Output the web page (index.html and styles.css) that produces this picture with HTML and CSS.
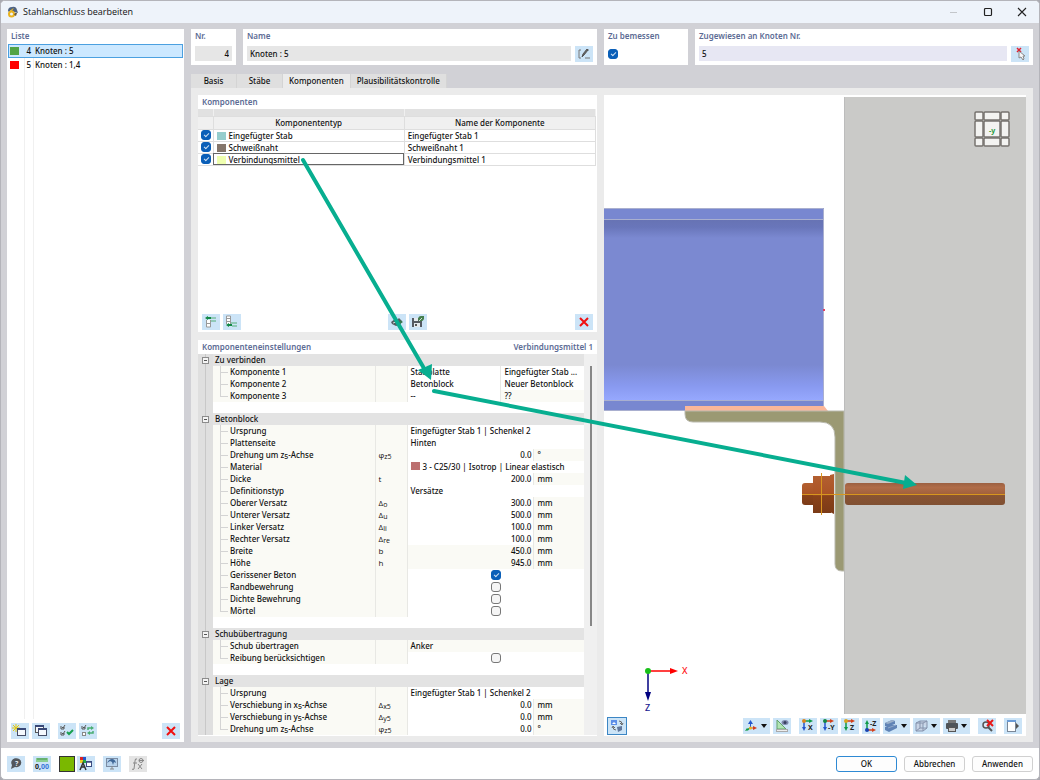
FILE: index.html
```html
<!DOCTYPE html>
<html lang="de">
<head>
<meta charset="UTF-8">
<meta name="viewport" content="width=device-width, initial-scale=1.0">
<title>Stahlanschluss bearbeiten</title>
<link rel="stylesheet" href="styles.css">
</head>
<body>

<div class="dialog">
  <header class="titlebar">
    <svg class="logo" width="12" height="12" viewBox="0 0 12 12"><path d="M1 5Q1 1 5 1Q9 0 10 4L11 7L7 6L4 4L2 6Z" fill="#4f6484"/><path d="M2 6L5 3L7 2L4 6Z" fill="#f0b81c"/><circle cx="4.500" cy="8" r="2.500" fill="none" stroke="#e9b320" stroke-width="2"/><path d="M8 7L10 7L9 10L7 9Z" fill="#6d5a35"/></svg>
    <h1>Stahlanschluss bearbeiten</h1>
    <button class="win-btn" aria-label="Minimieren"><svg width="10" height="10" viewBox="0 0 10 10"><path d="M1 5.500H8" stroke="#c3c6ca"/></svg></button>
    <button class="win-btn" aria-label="Maximieren"><svg width="10" height="10" viewBox="0 0 10 10"><rect x="1.500" y="1.500" width="7" height="7" rx="1" fill="none" stroke="#222" stroke-width="1.200"/></svg></button>
    <button class="win-btn" aria-label="Schließen"><svg width="10" height="10" viewBox="0 0 10 10"><path d="M1 1L9 9M9 1L1 9" stroke="#222" stroke-width="1.100"/></svg></button>
  </header>

  <div class="workspace">
    <aside class="panel list-panel">
      <h2>Liste</h2>
      <ul class="list">
        <li class="selected"><i class="swatch green"></i><span class="num">4</span><span>Knoten : 5</span></li>
        <li><i class="swatch red"></i><span class="num">5</span><span>Knoten : 1,4</span></li>
      </ul>
      <div class="tools">
        <button class="tool" aria-label="Neu"><svg width="18" height="16" viewBox="0 0 18 16"><path d="M5 1V9M1 5H9M2 2L8 8M8 2L2 8" stroke="#e2c918"/><rect x="6.500" y="5.500" width="8" height="7" fill="#f4f8fd" stroke="#444c66"/><path d="M6 6H15" stroke="#384878" stroke-width="2"/></svg></button>
        <button class="tool" aria-label="Kopieren"><svg width="18" height="16" viewBox="0 0 18 16"><rect x="3.500" y="2.500" width="8" height="7" fill="#f4f8fd" stroke="#555"/><path d="M3 3H12" stroke="#384878" stroke-width="2"/><rect x="6.500" y="5.500" width="8" height="7" fill="#f4f8fd" stroke="#444c66"/><path d="M6 6H15" stroke="#384878" stroke-width="2"/></svg></button>
        <button class="tool push" aria-label="Alle prüfen"><svg width="18" height="16" viewBox="0 0 18 16"><path d="M3 3V6H6V4M4 4L5 5L7 2M3 9V12H6V10M4 10L5 11L7 8" fill="none" stroke="#555"/><path d="M9 9L11 11L15 7" fill="none" stroke="#18a050" stroke-width="2"/></svg></button>
        <button class="tool" aria-label="Auswahl umkehren"><svg width="18" height="16" viewBox="0 0 18 16"><path d="M3 3V6H6V4M4 4L5 5L7 2" fill="none" stroke="#555"/><rect x="3.500" y="9.500" width="3" height="3" fill="#fff" stroke="#888"/><path d="M9 7V5H13M14 8V10H10" fill="none" stroke="#48ad72" stroke-width="1.500"/><path d="M12 3L15 5L12 7ZM11 8L8 10L11 12Z" fill="#48ad72"/></svg></button>
        <button class="tool right" aria-label="Löschen"><svg width="18" height="16" viewBox="0 0 18 16"><path d="M5 4L13 12M13 4L5 12" stroke="#f01010" stroke-width="2"/></svg></button>
      </div>
    </aside>

    <main class="main">
      <div class="fields">
        <div class="panel field">
          <label for="nr">Nr.</label>
          <input id="nr" class="text right-text" value="4" readonly>
        </div>
        <div class="panel field">
          <label for="name">Name</label>
          <div class="field-row">
            <input id="name" class="text" value="Knoten : 5" readonly>
            <button class="tool" aria-label="Name bearbeiten"><svg width="18" height="16" viewBox="0 0 18 16"><path d="M6 4H4V12H6M10 12H15M12 4H14" fill="none" stroke="#777"/><path d="M7 11L8 8L12 3L13 4L9 9Z" fill="#666" stroke="#555"/></svg></button>
          </div>
        </div>
        <div class="panel field">
          <label for="design">Zu bemessen</label>
          <div class="field-row"><input id="design" type="checkbox" checked></div>
        </div>
        <div class="panel field">
          <label for="assigned">Zugewiesen an Knoten Nr.</label>
          <div class="field-row">
            <input id="assigned" class="text lilac" value="5">
            <button class="tool" aria-label="Knoten wählen"><svg width="18" height="16" viewBox="0 0 18 16"><path d="M6 2L10 6M10 2L6 6" stroke="#e02030" stroke-width="1.500"/><path d="M8 5V12L10 11L12 14L13 13L12 10H14Z" fill="#f7f7fa" stroke="#888"/></svg></button>
          </div>
        </div>
      </div>

      <nav class="tabs">
        <button class="tab">Basis</button>
        <button class="tab">Stäbe</button>
        <button class="tab wide active">Komponenten</button>
        <button class="tab wide">Plausibilitätskontrolle</button>
      </nav>

      <div class="content">
        <div class="left">
          <section class="panel components">
            <h2>Komponenten</h2>
            <table class="comp-table">
              <colgroup><col class="c-check"><col><col></colgroup>
              <thead>
                <tr class="strip"><td></td><td></td><td></td></tr>
                <tr><th></th><th>Komponententyp</th><th>Name der Komponente</th></tr>
              </thead>
              <tbody>
                <tr><td><input type="checkbox" aria-label="Eingefügter Stab" checked></td><td><i class="swatch teal"></i>Eingefügter Stab</td><td>Eingefügter Stab 1</td></tr>
                <tr><td><input type="checkbox" aria-label="Schweißnaht" checked></td><td><i class="swatch brown"></i>Schweißnaht</td><td>Schweißnaht 1</td></tr>
                <tr><td><input type="checkbox" aria-label="Verbindungsmittel" checked></td><td class="focus"><i class="swatch lime"></i>Verbindungsmittel</td><td>Verbindungsmittel 1</td></tr>
              </tbody>
            </table>
            <div class="tools">
              <button class="tool" aria-label="Davor einfügen"><svg width="18" height="16" viewBox="0 0 18 16"><path d="M4.500 6V13H8.500V6M5 9.500H8" fill="#fff" stroke="#999"/><path d="M8 4H14M9 7H14" stroke="#54ae78"/><path d="M3 4L6 2V3H9V5H6V6Z" fill="#118844"/></svg></button>
              <button class="tool" aria-label="Danach einfügen"><svg width="18" height="16" viewBox="0 0 18 16"><path d="M3.500 10V2H7.500V10M4 4.500H7M4 7.500H7" fill="#fff" stroke="#999"/><path d="M8 9H14M9 12H14" stroke="#54ae78"/><path d="M3 11L6 9V10H9V12H6V13Z" fill="#118844"/></svg></button>
              <button class="tool center" aria-label="Bibliothek"><svg width="18" height="16" viewBox="0 0 18 16"><path d="M3 8L7 5L9 6L11 4L14 7L12 11L8 12L4 10Z" fill="#555b62"/><path d="M5 9L8 8L11 9" stroke="#ddd" fill="none"/><path d="M12 6L15 8L12 10Z" fill="#387a50"/></svg></button>
              <button class="tool" aria-label="Speichern"><svg width="18" height="16" viewBox="0 0 18 16"><path d="M3 4H12L13 5V13H3Z" fill="#555a62"/><rect x="5" y="4" width="4" height="3" fill="#e4e9ee"/><rect x="5" y="9" width="6" height="4" fill="#e4e9ee"/><path d="M6 10V12H8V10Z" fill="#555"/><path d="M9 6Q9 2 12 2L15 2V5Q14 8 10 7Z" fill="#467f4d"/><path d="M10 7L13 4" stroke="#cfe2d2"/></svg></button>
              <button class="tool right" aria-label="Komponente löschen"><svg width="18" height="16" viewBox="0 0 18 16"><path d="M5 4L13 12M13 4L5 12" stroke="#f01010" stroke-width="2"/></svg></button>
            </div>
          </section>

          <section class="panel settings">
            <div class="settings-head"><h2>Komponenteneinstellungen</h2><h2>Verbindungsmittel 1</h2></div>
            <div class="tree-wrap">
              <table class="tree">
                <colgroup><col class="t-gutter"><col class="t-label"><col class="t-sym"><col><col class="t-num"><col class="t-unit"></colgroup>
                <tbody>
                  <tr class="group"><td><button class="fold" aria-label="Zuklappen"></button></td><th colspan="5">Zu verbinden</th></tr>
                  <tr><td></td><td>Komponente 1</td><td></td><td>Stabplatte</td><td class="sep" colspan="2">Eingefügter Stab ...</td></tr>
                  <tr><td></td><td>Komponente 2</td><td></td><td>Betonblock</td><td class="sep" colspan="2">Neuer Betonblock</td></tr>
                  <tr class="last"><td></td><td>Komponente 3</td><td></td><td>--</td><td class="sep off" colspan="2">??</td></tr>
                  <tr class="gap"><td></td><td colspan="5"></td></tr>

                  <tr class="group"><td><button class="fold" aria-label="Zuklappen"></button></td><th colspan="5">Betonblock</th></tr>
                  <tr><td></td><td>Ursprung</td><td></td><td colspan="3">Eingefügter Stab 1 | Schenkel 2</td></tr>
                  <tr><td></td><td>Plattenseite</td><td></td><td colspan="3">Hinten</td></tr>
                  <tr><td></td><td>Drehung um z<small>5</small>-Achse</td><td>φ<small>z5</small></td><td class="number" colspan="2">0.0</td><td class="unit">°</td></tr>
                  <tr><td></td><td>Material</td><td></td><td colspan="3"><i class="swatch rose"></i>3 - C25/30 | Isotrop | Linear elastisch</td></tr>
                  <tr><td></td><td>Dicke</td><td>t</td><td class="number" colspan="2">200.0</td><td class="unit">mm</td></tr>
                  <tr><td></td><td>Definitionstyp</td><td></td><td colspan="3">Versätze</td></tr>
                  <tr><td></td><td>Oberer Versatz</td><td>Δ<small>o</small></td><td class="number" colspan="2">300.0</td><td class="unit">mm</td></tr>
                  <tr><td></td><td>Unterer Versatz</td><td>Δ<small>u</small></td><td class="number" colspan="2">500.0</td><td class="unit">mm</td></tr>
                  <tr><td></td><td>Linker Versatz</td><td>Δ<small>li</small></td><td class="number" colspan="2">100.0</td><td class="unit">mm</td></tr>
                  <tr><td></td><td>Rechter Versatz</td><td>Δ<small>re</small></td><td class="number" colspan="2">100.0</td><td class="unit">mm</td></tr>
                  <tr><td></td><td>Breite</td><td>b</td><td class="number off" colspan="2">450.0</td><td class="unit">mm</td></tr>
                  <tr><td></td><td>Höhe</td><td>h</td><td class="number off" colspan="2">945.0</td><td class="unit">mm</td></tr>
                  <tr><td></td><td><label for="cracked">Gerissener Beton</label></td><td></td><td colspan="3"><input id="cracked" type="checkbox" checked></td></tr>
                  <tr><td></td><td><label for="edge">Randbewehrung</label></td><td></td><td colspan="3"><input id="edge" type="checkbox"></td></tr>
                  <tr><td></td><td><label for="dense">Dichte Bewehrung</label></td><td></td><td colspan="3"><input id="dense" type="checkbox"></td></tr>
                  <tr class="last"><td></td><td><label for="grout">Mörtel</label></td><td></td><td colspan="3"><input id="grout" type="checkbox"></td></tr>
                  <tr class="gap"><td></td><td colspan="5"></td></tr>

                  <tr class="group"><td><button class="fold" aria-label="Zuklappen"></button></td><th colspan="5">Schubübertragung</th></tr>
                  <tr><td></td><td>Schub übertragen</td><td></td><td class="off" colspan="3">Anker</td></tr>
                  <tr class="last"><td></td><td><label for="friction">Reibung berücksichtigen</label></td><td></td><td colspan="3"><input id="friction" type="checkbox"></td></tr>
                  <tr class="gap"><td></td><td colspan="5"></td></tr>

                  <tr class="group"><td><button class="fold" aria-label="Zuklappen"></button></td><th colspan="5">Lage</th></tr>
                  <tr><td></td><td>Ursprung</td><td></td><td colspan="3">Eingefügter Stab 1 | Schenkel 2</td></tr>
                  <tr><td></td><td>Verschiebung in x<small>5</small>-Achse</td><td>Δ<small>x5</small></td><td class="number" colspan="2">0.0</td><td class="unit">mm</td></tr>
                  <tr><td></td><td>Verschiebung in y<small>5</small>-Achse</td><td>Δ<small>y5</small></td><td class="number" colspan="2">0.0</td><td class="unit">mm</td></tr>
                  <tr class="last"><td></td><td>Drehung um z<small>5</small>-Achse</td><td>φ<small>z5</small></td><td class="number" colspan="2">0.0</td><td class="unit">°</td></tr>
                </tbody>
              </table>
              <div class="scroll"><div class="thumb"></div></div>
            </div>
          </section>
        </div>

        <section class="view">
          <div class="canvas">
            <svg class="scene" width="100%" height="100%">
              <defs>
                <linearGradient id="web" x1="0" y1="0" x2="0" y2="1">
                  <stop offset="0" stop-color="#6773b4"/>
                  <stop offset=".04" stop-color="#6976ba"/>
                  <stop offset=".1" stop-color="#7b89d1"/>
                  <stop offset=".8" stop-color="#7b89d1"/>
                  <stop offset=".92" stop-color="#899af0"/>
                  <stop offset="1" stop-color="#97a9ff"/>
                </linearGradient>
                <linearGradient id="nut" x1="0" y1="0" x2="0" y2="1">
                  <stop offset="0" stop-color="#b35f30"/>
                  <stop offset=".48" stop-color="#ab5426"/>
                  <stop offset=".55" stop-color="#8a4219"/>
                  <stop offset="1" stop-color="#7b3b17"/>
                </linearGradient>
                <linearGradient id="rod" x1="0" y1="0" x2="0" y2="1">
                  <stop offset="0" stop-color="#9c6041"/>
                  <stop offset=".2" stop-color="#b06c48"/>
                  <stop offset=".5" stop-color="#a2613c"/>
                  <stop offset=".55" stop-color="#8a5432"/>
                  <stop offset="1" stop-color="#805033"/>
                </linearGradient>
              </defs>
              <!-- Beton -->
              <rect x="241" y="2" width="3000" height="3000" fill="#cacac8"/>
              <path d="M240.500 2V3000" stroke="#bcbcbc"/>
              <!-- Träger -->
              <rect x="0" y="113" width="220" height="203" fill="#7887d0"/>
              <rect x="0" y="125" width="220" height="181" fill="url(#web)"/>
              <path d="M0 113.500H219.500V316M0 124.500H219M0 305.500H219M0 315.500H82" fill="none" stroke="#a9afcf"/>
              <path d="M219 215H221" stroke="#e04060" stroke-width="2"/>
              <!-- Schweißnaht und Winkel -->
              <path d="M81 311H220L224 316H81Z" fill="#fbb799"/>
              <path d="M81 316H240V476H238Q231 476 231 469V342Q231 327 216 327H89Q81 327 81 319Z" fill="#9b9973" stroke="#b9b9ae"/>
              <!-- Anker -->
              <rect x="241" y="388" width="160" height="22" rx="3" fill="url(#rod)"/>
              <rect x="198" y="388" width="14" height="22" rx="3" fill="url(#nut)"/>
              <rect x="209" y="381" width="18" height="37" fill="url(#nut)"/>
              <path d="M226 380L230 379V419L226 417Z" fill="url(#nut)"/>
              <path d="M198 399.500H401M217.500 378V420" stroke="#d8961e"/>
              <!-- Achsenkreuz -->
              <path d="M44 576H67" stroke="#ff0000" stroke-width="1.500"/>
              <path d="M66 573L74 576L66 579Z" fill="#ff0000"/>
              <path d="M44 576V599" stroke="#000080" stroke-width="1.500"/>
              <path d="M41 597L44 606L47 597Z" fill="#000080"/>
              <circle cx="44" cy="576" r="3" fill="#18c018"/>
              <text x="78" y="579" class="axis" fill="#ff2020">X</text>
              <text x="41" y="616" class="axis" fill="#202090">Z</text>
            </svg>
            <svg class="cube" width="36" height="36" viewBox="0 0 36 36"><g fill="#f3f3f1" stroke="#77736f" stroke-width="1.500"><rect x="1" y="1" width="8" height="8" rx="1"/><rect x="10" y="1" width="16" height="8" rx="1"/><rect x="27" y="1" width="8" height="8" rx="1"/><rect x="1" y="10" width="8" height="16" rx="1"/><rect x="10" y="10" width="16" height="16" rx="1"/><rect x="27" y="10" width="8" height="16" rx="1"/><rect x="1" y="27" width="8" height="8" rx="1"/><rect x="10" y="27" width="16" height="8" rx="1"/><rect x="27" y="27" width="8" height="8" rx="1"/></g><text x="15" y="22" class="face">-y</text></svg>
          </div>
          <div class="view-tools">
            <button class="tool toggled" aria-label="Ansicht wechseln"><svg width="18" height="16" viewBox="0 0 18 16"><rect x="3" y="2" width="6" height="5" fill="#5c8ee8"/><path d="M4 6L6 4L8 6" fill="#fff"/><path d="M11 3Q14 3 14 6M12 5L14 7L15 5M5 9Q5 12 8 12M4 10L5 8L7 10" fill="none" stroke="#666"/><path d="M9 9L14 8V12L10 14Z" fill="#60779c"/></svg></button>
            <div class="group-tools left-auto">
              <button class="tool combo" aria-label="Achsen"><svg width="18" height="16" viewBox="0 0 18 16"><path d="M7.500 10V5" stroke="#2255cc"/><path d="M5 6L7.500 2L10 6Z" fill="#2255cc"/><path d="M7 10L4 12" stroke="#119944" stroke-width="1.500"/><path d="M2 13L4 10L6 12Z" fill="#119944"/><path d="M8 10H11" stroke="#e04a20"/><path d="M10 8L14 10L10 12Z" fill="#d33b1c"/><circle cx="7.500" cy="10" r="1.500" fill="#eab020"/></svg></button>
              <button class="tool" aria-label="Messen"><svg width="18" height="16" viewBox="0 0 18 16"><path d="M4 2V11H13Z" fill="#b2e5b4" stroke="#62a06c"/><rect x="3.500" y="11.500" width="11" height="2" fill="#eee" stroke="#aaa"/><ellipse cx="12" cy="4.500" rx="3.500" ry="2.500" fill="#8089ad"/><circle cx="12" cy="4.500" r="1.500" fill="#39405f"/></svg></button>
            </div>
            <div class="group-tools">
              <button class="tool" aria-label="Ansicht X"><svg width="18" height="16" viewBox="0 0 18 16"><path d="M5 3H11" stroke="#109a48" stroke-width="1.500"/><path d="M10 1L14 3L10 5Z" fill="#109a48"/><path d="M5 4V10" stroke="#2255cc" stroke-width="1.500"/><path d="M3 9L5 13L7 9Z" fill="#2255cc"/><circle cx="5" cy="3" r="2" fill="#d98520"/><text x="9" y="12" class="glyph">X</text></svg></button>
              <button class="tool" aria-label="Ansicht -Y"><svg width="18" height="16" viewBox="0 0 18 16"><path d="M5 3H11" stroke="#d3421c" stroke-width="1.500"/><path d="M10 1L14 3L10 5Z" fill="#d3421c"/><path d="M5 4V10" stroke="#2255cc" stroke-width="1.500"/><path d="M3 9L5 13L7 9Z" fill="#2255cc"/><circle cx="5" cy="3" r="2" fill="#118844"/><text x="8" y="12" class="glyph">-Y</text></svg></button>
              <button class="tool" aria-label="Ansicht Z"><svg width="18" height="16" viewBox="0 0 18 16"><path d="M5 3H11" stroke="#d3421c" stroke-width="1.500"/><path d="M10 1L14 3L10 5Z" fill="#d3421c"/><path d="M5 4V10" stroke="#109a48" stroke-width="1.500"/><path d="M3 9L5 13L7 9Z" fill="#109a48"/><circle cx="5" cy="3" r="2" fill="#d9a520"/><text x="9" y="12" class="glyph">Z</text></svg></button>
              <button class="tool" aria-label="Ansicht -Z"><svg width="18" height="16" viewBox="0 0 18 16"><path d="M5 5V12" stroke="#109a48" stroke-width="1.500"/><path d="M3 6L5 2L7 6Z" fill="#109a48"/><path d="M5 12H11" stroke="#d3421c" stroke-width="1.500"/><path d="M10 10L14 12L10 14Z" fill="#d3421c"/><circle cx="5" cy="12" r="2" fill="#1844b0"/><text x="8" y="8" class="glyph">-Z</text></svg></button>
              <button class="tool combo" aria-label="Darstellung"><svg width="18" height="16" viewBox="0 0 18 16"><path d="M2 5L9 2L12 3V6L9 7L14 7V10L6 14L2 12V9L4 8L2 8Z" fill="#5f83b6"/><path d="M2 5L9 2L12 3L5 6Z" fill="#9bb0ca"/><path d="M5 10L13 7" stroke="#8fa9cb"/></svg></button>
              <button class="tool combo" aria-label="Körper"><svg width="18" height="16" viewBox="0 0 18 16"><path d="M3 5L7 3H14V10L10 13H3ZM3 5H10V13M10 5L14 3M7 3V10H14M7 10L3 13" fill="#c8d4e6" stroke="#8492ac"/></svg></button>
              <button class="tool combo" aria-label="Drucken"><svg width="18" height="16" viewBox="0 0 18 16"><rect x="5" y="2" width="8" height="3" fill="#777"/><rect x="3" y="5" width="12" height="6" rx="1" fill="#4e5358"/><rect x="5.500" y="9.500" width="7" height="4" fill="#ccc" stroke="#555"/></svg></button>
            </div>
            <div class="group-tools">
              <button class="tool" aria-label="Filter löschen"><svg width="18" height="16" viewBox="0 0 18 16"><circle cx="8" cy="7" r="3" fill="#dcebf7" stroke="#555" stroke-width="1.500"/><path d="M10 9L14 13" stroke="#555" stroke-width="2"/><path d="M9 2L15 8M15 2L9 8" stroke="#e81818" stroke-width="2"/></svg></button>
            </div>
            <div class="group-tools">
              <button class="tool" aria-label="Ablösen"><svg width="18" height="16" viewBox="0 0 18 16"><rect x="3.500" y="2.500" width="8" height="11" fill="#fff" stroke="#7a8797"/><path d="M3 3H12" stroke="#6b9bd6" stroke-width="2"/><path d="M12 5L15 8L12 11Z" fill="#555"/></svg></button>
            </div>
          </div>
        </section>
      </div>
    </main>
  </div>

  <footer class="footer">
    <button class="tool" aria-label="Hilfe"><svg width="18" height="16" viewBox="0 0 18 16"><path d="M4 13L5 9A5 4.500 0 1 1 8 11Z" fill="#53575c"/><text x="8" y="10" class="glyph light">?</text></svg></button>
    <button class="tool" aria-label="Einheiten"><svg width="18" height="16" viewBox="0 0 18 16"><rect x="3" y="2" width="12" height="4" fill="#8bcf91"/><path d="M5 2V4M7 2V4M9 2V4M11 2V4M13 2V4" stroke="#459450"/><text x="2" y="13" class="glyph">0,</text><text x="8" y="13" class="glyph blue">00</text></svg></button>
    <div class="color-pair">
      <button class="color" aria-label="Farbe"></button>
      <button class="tool" aria-label="Farbe wählen"><svg width="18" height="16" viewBox="0 0 18 16"><rect x="3" y="1" width="3" height="3" fill="#d22"/><rect x="6" y="1" width="3" height="3" fill="#25c"/><rect x="3" y="4" width="3" height="3" fill="#ec2"/><rect x="6" y="4" width="3" height="3" fill="#2a4"/><path d="M3 14L6 7L9 14M4 11H8" fill="none" stroke="#333" stroke-width="1.500"/><rect x="9.500" y="5.500" width="5" height="5" fill="#fff" stroke="#3c4c80"/><path d="M9 6H15" stroke="#3c4c80" stroke-width="1.500"/></svg></button>
    </div>
    <button class="tool" aria-label="Darstellung"><svg width="18" height="16" viewBox="0 0 18 16"><rect x="3.500" y="2.500" width="11" height="8" fill="#b8d3ec" stroke="#7b8ca3"/><path d="M4 7Q6 3 9 3Q12 3 13 7L11 6L10 9L9 6L7 5Z" fill="#3f6797"/><path d="M7 13H11M9 10V13" stroke="#888"/></svg></button>
    <button class="tool disabled" aria-label="Formel" disabled><svg width="18" height="16" viewBox="0 0 18 16"><path d="M8 3Q6 2 6 5L5 13Q4 14 3 13M4 7H8M9 8L13 13M13 8L9 13" fill="none" stroke="#888"/><circle cx="12" cy="4.500" r="2" fill="none" stroke="#888"/><path d="M10 4.500H15" stroke="#888"/></svg></button>
    <div class="actions">
      <button class="action primary">OK</button>
      <button class="action">Abbrechen</button>
      <button class="action">Anwenden</button>
    </div>
  </footer>

  <svg class="arrows" width="100%" height="100%">
    <g stroke="#07ae90" stroke-width="4" stroke-linecap="round">
      <path d="M303 160L425 370"/>
      <path d="M434 391L906 483"/>
    </g>
    <path d="M431 380L418 370L432 364Z" fill="#07ae90"/>
    <path d="M917 485L905 475L903 489Z" fill="#07ae90"/>
  </svg>
</div>

</body>
</html>
```

FILE: styles.css
```css
* {
  box-sizing: border-box;
}

body {
  margin: 0;
  font-family: "Noto Sans", "Open Sans", sans-serif;
  font-size: 8px;
  font-weight: 500;
  line-height: 12px;
  color: #111;
  background-color: #a9a9b0;
}

h1, h2, ul {
  margin: 0;
  padding: 0;
}

h2, .field label {
  font-size: 8px;
  line-height: 12px;
  font-weight: 600;
  color: #5c6b94;
}

button, input {
  font: inherit;
  color: inherit;
  margin: 0;
  padding: 0;
}

button {
  border: none;
  cursor: pointer;
}

svg {
  display: block;
}

.dialog {
  position: relative;
  display: flex;
  flex-direction: column;
  min-height: 100vh;
  border: 1px solid #b4b4ba;
  border-radius: 5px;
  background-color: #fff;
  overflow: hidden;
}

/* Titelleiste */
.titlebar {
  display: flex;
  align-items: center;
  height: 22px;
  padding: 0 7px 0 6px;
  background-color: #eef3fa;
}

.titlebar h1 {
  flex: 1;
  margin-left: 4px;
  font-family: "Open Sans", sans-serif;
  font-size: 9px;
  font-weight: normal;
}

.win-btn {
  display: flex;
  justify-content: center;
  width: 20px;
  margin-left: 14px;
  background: none;
}

.workspace {
  flex: 1;
  display: flex;
  gap: 7px;
  padding: 6px;
  background-color: #d1d1d6;
}

.panel {
  background-color: #fff;
}

.swatch {
  display: inline-block;
  width: 9px;
  height: 8px;
}

.green { background-color: #52a447; }
.red { background-color: #ff0000; }
.teal { background-color: #95cdcd; }
.brown { background-color: #84756a; }
.lime { background-color: #efffaf; }
.rose { background-color: #bc7070; }

input[type="checkbox"] {
  appearance: none;
  position: relative;
  display: block;
  width: 10px;
  height: 10px;
  border: 1px solid #777;
  border-radius: 3px;
  background-color: #f5f5f5;
}

input[type="checkbox"]:checked {
  border-color: #0a5fb8;
  background-color: #0a5fb8;
}

input[type="checkbox"]:checked::after {
  content: "";
  position: absolute;
  left: 2px;
  top: 2px;
  width: 4px;
  height: 2px;
  border-left: 1px solid #cfe0f2;
  border-bottom: 1px solid #cfe0f2;
  transform: rotate(-45deg);
}

.tool {
  display: flex;
  flex: none;
  width: 18px;
  height: 16px;
  background-color: #cce4f7;
}

.tool.combo {
  width: 27px;
  align-items: center;
}

.tool.combo::after {
  content: "";
  border: 3px solid transparent;
  border-top: 4px solid #111;
  border-bottom: none;
}

.tool.toggled {
  outline: 1px solid #3c86c4;
}

.tool.disabled {
  background-color: #e4e4e4;
}

.tools {
  display: flex;
  gap: 3px;
  padding: 0 4px;
}

.tools .push {
  margin-left: 5px;
}

.tools .right {
  margin-left: auto;
}

/* Liste links */
.list-panel {
  display: flex;
  flex-direction: column;
  flex: none;
  width: 177px;
  padding-bottom: 3px;
}

.list-panel h2 {
  height: 15px;
  padding: 1px 4px;
}

.list {
  flex: 1;
  margin: 0 1px 4px;
  list-style: none;
  background: linear-gradient(#f0f0f0, #f0f0f0) 16px 0 / 1px 100% no-repeat,
    linear-gradient(#f0f0f0, #f0f0f0) 25px 0 / 1px 100% no-repeat;
}

.list li {
  display: flex;
  align-items: center;
  height: 14px;
  padding-left: 2px;
}

.list li.selected {
  background-color: #cce8ff;
  outline: 1px solid #4ba0e0;
  outline-offset: -1px;
}

.list .num {
  width: 12px;
  margin-right: 4px;
  text-align: right;
}

/* Kopfbereich */
.main {
  flex: 1;
  min-width: 0;
  display: flex;
  flex-direction: column;
}

.fields {
  display: grid;
  grid-template-columns: 45px 354px 84px 1fr;
  gap: 7px;
  margin-bottom: 9px;
}

.field {
  height: 36px;
  padding: 1px 4px;
}

.field label {
  display: block;
  margin-bottom: 4px;
}

.field-row {
  display: flex;
  align-items: center;
  height: 15px;
  gap: 4px;
}

.text {
  display: block;
  width: 100%;
  height: 15px;
  padding: 0 3px;
  border: none;
  background-color: #e6e6e6;
}

.text.lilac {
  background-color: #e7e7f3;
}

.right-text {
  text-align: right;
}

.tabs {
  display: flex;
  height: 14px;
}

.tab {
  width: 46px;
  height: 14px;
  border-right: 1px solid #d4d4d4;
  background-color: #dfdfdf;
}

.tab.wide {
  width: auto;
  padding: 0 6px;
}

.tab.active {
  background-color: #ebebeb;
}

.content {
  flex: 1;
  display: flex;
  gap: 7px;
  padding: 7px 7px 6px;
  background-color: #ebebeb;
}

.left {
  flex: none;
  width: 399px;
  display: flex;
  flex-direction: column;
  gap: 8px;
}

/* Komponenten */
.components {
  flex: 1;
  display: flex;
  flex-direction: column;
  padding-bottom: 2px;
}

.components h2 {
  padding: 1px 4px;
}

.components .tools {
  margin-top: auto;
}

.components .center {
  margin-left: 144px;
}

.comp-table, .tree {
  border-collapse: collapse;
  table-layout: fixed;
}

.comp-table {
  width: 398px;
}

.c-check {
  width: 15px;
}

.comp-table td, .comp-table th {
  height: 12px;
  padding: 0 3px;
  line-height: 11px;
  font-weight: inherit;
  border-right: 1px solid #dedede;
  border-bottom: 1px solid #dedede;
}

.comp-table th {
  height: 13px;
  background-color: #f0f0f0;
}

.comp-table .strip td {
  height: 7px;
  background-color: #e1e1e1;
  border-right-color: #f0f0f0;
}

.comp-table .swatch {
  margin-right: 3px;
  vertical-align: middle;
}

.comp-table .focus {
  outline: 1px solid #666;
  outline-offset: -1px;
}

/* Eigenschaften */
.settings {
  padding-bottom: 1px;
}

.settings-head {
  display: flex;
  justify-content: space-between;
  height: 14px;
  padding: 1px 4px;
}

.tree-wrap {
  display: flex;
  background-color: #f0f0f0;
}

.tree {
  flex: none;
  width: 386px;
  background-color: #fff;
}

.t-gutter { width: 15px; }
.t-label { width: 162px; }
.t-sym { width: 32px; }
.t-num { width: 33px; }
.t-unit { width: 50px; }

.tree td, .tree th {
  height: 12px;
  padding: 0 3px;
  font-weight: inherit;
  line-height: 12px;
  white-space: nowrap;
}

.tree small {
  font-size: 7px;
  position: relative;
  top: 1px;
  line-height: 1;
}

.tree td:first-child {
  padding: 0;
  background: linear-gradient(#c8c8c8, #c8c8c8) 7px 0 / 1px 100% no-repeat #dfdfdf;
}

.tree td:nth-child(2) {
  padding-left: 17px;
  border-right: 1px solid #e8e8e4;
  background: linear-gradient(#d4d4d4, #d4d4d4) 7px 0 / 1px 100% no-repeat,
    linear-gradient(#d4d4d4, #d4d4d4) 7px 6px / 8px 1px no-repeat #fafaf5;
}

.tree .last td:nth-child(2) {
  background-size: 1px 6px, 8px 1px;
}

.tree td:nth-child(3) {
  border-right: 1px solid #e8e8e4;
  font-family: "Open Sans", "Noto Sans", sans-serif;
  background-color: #fafaf5;
}

.tree .group th {
  padding-left: 2px;
  text-align: left;
  background-color: #e3e3e3;
}

.tree .gap td {
  height: 11px;
  line-height: 11px;
}

.tree .gap td:nth-child(2) {
  border: none;
  background: none;
}

.tree .number {
  padding-right: 2px;
  text-align: right;
}

.tree .unit, .tree .off {
  background-color: #fafaf5;
}

.tree .unit, .tree .sep {
  border-left: 1px solid #e8e8e4;
}

.tree .swatch {
  margin-right: 3px;
}

.tree input {
  margin: 0 auto;
}

.fold {
  display: block;
  width: 7px;
  height: 7px;
  margin-left: 4px;
  border: 1px solid #8c8c8c;
  background: linear-gradient(#555, #555) 1px 2px / 3px 1px no-repeat #f4f4f4;
}

.scroll {
  flex: 1;
  padding: 12px 0 0 6px;
}

.thumb {
  width: 2px;
  height: 260px;
  background-color: #868686;
}

/* Ansicht */
.view {
  flex: 1;
  min-width: 0;
  display: flex;
  flex-direction: column;
  background-color: #fff;
}

.canvas {
  position: relative;
  flex: 1;
}

.scene {
  position: absolute;
  inset: 0;
}

.cube {
  position: absolute;
  top: 16px;
  right: 16px;
}

.axis {
  font-size: 9px;
}

.face {
  font-size: 7px;
  font-weight: bold;
  fill: #259a3c;
}

.glyph {
  font-size: 7px;
  font-weight: bold;
  fill: #222;
}

.glyph.blue {
  fill: #3a78d8;
}

.glyph.light {
  fill: #e4eef6;
}

.view-tools {
  display: flex;
  gap: 8px;
  padding: 4px 4px 2px;
}

.group-tools {
  display: flex;
  gap: 3px;
}

.left-auto {
  margin-left: auto;
}

/* Fußzeile */
.footer {
  display: flex;
  align-items: center;
  gap: 8px;
  height: 31px;
  padding: 0 6px;
}

.color-pair {
  display: flex;
  gap: 2px;
}

.color {
  width: 16px;
  height: 16px;
  border: 1px solid #333;
  background-color: #7ab800;
}

.actions {
  display: flex;
  gap: 7px;
  margin-left: auto;
}

.action {
  width: 61px;
  height: 16px;
  border: 1px solid #d0d0d0;
  border-radius: 3px;
  background-color: #fdfdfd;
}

.action.primary {
  border-color: #2f8ad4;
}

/* Hinweispfeile über dem Dialog */
.arrows {
  position: absolute;
  inset: -1px;
  pointer-events: none;
}
```
